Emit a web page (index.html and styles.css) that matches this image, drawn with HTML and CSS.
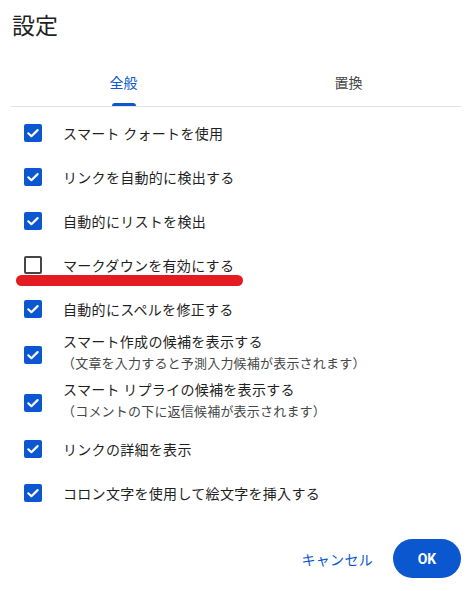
FILE: index.html
```html
<!DOCTYPE html>
<html lang="ja">
<head>
<meta charset="utf-8">
<title>設定</title>
<link rel="stylesheet" href="styles.css">
</head>
<body>
<div class="dialog">
  <h1 class="title">設定</h1>
  <div class="tabs">
    <div class="tab active"><span>全般</span><i class="indicator"></i></div>
    <div class="tab"><span>置換</span></div>
  </div>
  <ul class="options">
    <li class="row"><span class="cb on"><svg viewBox="0 0 18 18" width="18" height="18"><rect width="18" height="18" rx="2" fill="#0b57d0"/><path d="M4.3 9.3 7.4 12.2 13.6 6.1" fill="none" stroke="#fff" stroke-width="2.2" stroke-linecap="round" stroke-linejoin="round"/></svg></span><div class="label"><div class="main">スマート クォートを使用</div></div></li>
    <li class="row"><span class="cb on"><svg viewBox="0 0 18 18" width="18" height="18"><rect width="18" height="18" rx="2" fill="#0b57d0"/><path d="M4.3 9.3 7.4 12.2 13.6 6.1" fill="none" stroke="#fff" stroke-width="2.2" stroke-linecap="round" stroke-linejoin="round"/></svg></span><div class="label"><div class="main">リンクを自動的に検出する</div></div></li>
    <li class="row"><span class="cb on"><svg viewBox="0 0 18 18" width="18" height="18"><rect width="18" height="18" rx="2" fill="#0b57d0"/><path d="M4.3 9.3 7.4 12.2 13.6 6.1" fill="none" stroke="#fff" stroke-width="2.2" stroke-linecap="round" stroke-linejoin="round"/></svg></span><div class="label"><div class="main">自動的にリストを検出</div></div></li>
    <li class="row marked"><span class="cb off"></span><div class="label"><div class="main">マークダウンを有効にする</div></div><i class="redline"></i></li>
    <li class="row"><span class="cb on"><svg viewBox="0 0 18 18" width="18" height="18"><rect width="18" height="18" rx="2" fill="#0b57d0"/><path d="M4.3 9.3 7.4 12.2 13.6 6.1" fill="none" stroke="#fff" stroke-width="2.2" stroke-linecap="round" stroke-linejoin="round"/></svg></span><div class="label"><div class="main">自動的にスペルを修正する</div></div></li>
    <li class="row two"><span class="cb on"><svg viewBox="0 0 18 18" width="18" height="18"><rect width="18" height="18" rx="2" fill="#0b57d0"/><path d="M4.3 9.3 7.4 12.2 13.6 6.1" fill="none" stroke="#fff" stroke-width="2.2" stroke-linecap="round" stroke-linejoin="round"/></svg></span><div class="label"><div class="main">スマート作成の候補を表示する</div><div class="sub">（文章を入力すると予測入力候補が表示されます）</div></div></li>
    <li class="row two"><span class="cb on"><svg viewBox="0 0 18 18" width="18" height="18"><rect width="18" height="18" rx="2" fill="#0b57d0"/><path d="M4.3 9.3 7.4 12.2 13.6 6.1" fill="none" stroke="#fff" stroke-width="2.2" stroke-linecap="round" stroke-linejoin="round"/></svg></span><div class="label"><div class="main">スマート リプライの候補を表示する</div><div class="sub">（コメントの下に返信候補が表示されます）</div></div></li>
    <li class="row"><span class="cb on"><svg viewBox="0 0 18 18" width="18" height="18"><rect width="18" height="18" rx="2" fill="#0b57d0"/><path d="M4.3 9.3 7.4 12.2 13.6 6.1" fill="none" stroke="#fff" stroke-width="2.2" stroke-linecap="round" stroke-linejoin="round"/></svg></span><div class="label"><div class="main">リンクの詳細を表示</div></div></li>
    <li class="row"><span class="cb on"><svg viewBox="0 0 18 18" width="18" height="18"><rect width="18" height="18" rx="2" fill="#0b57d0"/><path d="M4.3 9.3 7.4 12.2 13.6 6.1" fill="none" stroke="#fff" stroke-width="2.2" stroke-linecap="round" stroke-linejoin="round"/></svg></span><div class="label"><div class="main">コロン文字を使用して絵文字を挿入する</div></div></li>
  </ul>
  <div class="footer">
    <button class="btn cancel">キャンセル</button>
    <button class="btn ok">OK</button>
  </div>
</div>
</body>
</html>
```
FILE: styles.css
```css
* { box-sizing: border-box; }
html, body { margin: 0; padding: 0; background: #fff; }
body {
  font-family: "Noto Sans CJK JP", "Noto Sans", sans-serif;
  color: #1f1f1f;
  width: 470px;
  height: 591px;
  overflow: hidden;
}
.dialog {
  padding: 0 9px 0 11px;
}
.title {
  margin: 0;
  padding: 8px 0 0 1px;
  height: 40px;
  font-size: 23px;
  line-height: 32px;
  font-weight: 400;
  color: #1f1f1f;
}
.tabs {
  margin-top: 18px;
  display: flex;
  border-bottom: 1px solid #e1e3e1;
}
.tab {
  flex: 1;
  height: 48px;
  display: flex;
  flex-direction: column;
  align-items: center;
  justify-content: center;
  position: relative;
  font-size: 14px;
  line-height: 20px;
  color: #444746;
}
.tab.active { color: #0b57d0; }
.indicator {
  position: absolute;
  bottom: 0;
  left: 50%;
  width: 24px;
  margin-left: -12px;
  height: 3px;
  border-radius: 3px 3px 0 0;
  background: #0b57d0;
}
.options {
  list-style: none;
  margin: 0;
  padding: 4px 0 0 13px;
}
.row {
  display: flex;
  align-items: center;
  height: 44px;
  position: relative;
}
.row.two {
  height: 48px;
  align-items: center;
}
.cb {
  width: 18px;
  height: 18px;
  flex: none;
  display: block;
}
.cb svg { display: block; }
.cb.off {
  border: 2px solid #444746;
  border-radius: 2px;
}
.label {
  margin-left: 21px;
  font-size: 14px;
  line-height: 20px;
  letter-spacing: 0.3px;
}
.row.two .label { padding-bottom: 4px; }
.sub {
  font-size: 13px;
  line-height: 24px;
  color: #444746;
  margin-left: -1px;
  letter-spacing: 0.2px;
}
.redline {
  position: absolute;
  left: -8px;
  top: 32px;
  width: 227px;
  height: 11px;
  border-radius: 6px;
  background: #e41c22;
}
.footer {
  display: flex;
  justify-content: flex-end;
  align-items: center;
  margin-top: 24px;
  gap: 8px;
}
.btn {
  font-family: "Noto Sans CJK JP", "Noto Sans", sans-serif;
  font-size: 14px;
  border: none;
  height: 39px;
  background: transparent;
  cursor: pointer;
}
.cancel {
  color: #0b57d0;
  padding: 0 12px;
  letter-spacing: 0.3px;
}
.ok {
  width: 68px;
  border-radius: 20px;
  background: #0b57d0;
  color: #fff;
  font-family: Roboto, "Noto Sans", sans-serif;
  font-weight: 700;
  font-size: 14px;
}
```
